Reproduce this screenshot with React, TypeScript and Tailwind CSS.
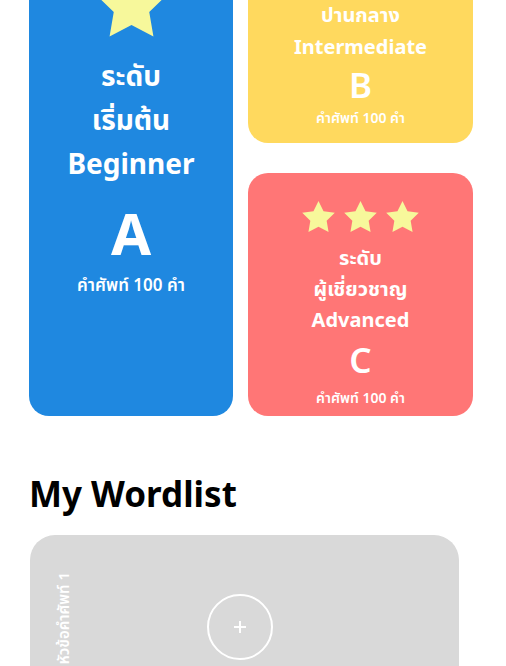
import React from "react";

const Star = ({ w, h }: { w: number; h: number }) => (
  <svg width={w} height={h} viewBox="2 2 20 19.02" className="shrink-0">
    <path
      d="M12 2l3.09 6.26L22 9.27l-5 4.87 1.18 6.88L12 17.77l-6.18 3.25L7 14.14 2 9.27l6.91-1.01L12 2z"
      fill="#f7f89b"
    />
  </svg>
);

const font = { fontFamily: '"Noto Sans", "Noto Sans Thai", "Open Sans", sans-serif' };

export default function App() {
  return (
    <div
      className="w-[506px] h-[666px] overflow-hidden bg-white pl-[29px] text-white"
      style={font}
    >
      <div className="grid grid-cols-[204px_225px] grid-rows-[203px_243px] gap-x-[15px] gap-y-[30px] mt-[-60px]">
        {/* Blue */}
        <div className="row-span-2 rounded-[20px] bg-[#1f88e0] flex flex-col items-center pt-[29px]">
          <Star w={71} h={67.5} />
          <div className="mt-[16px] flex flex-col items-center text-[28px] leading-[44px] font-bold">
            <span>ระดับ</span>
            <span>เริ่มต้น</span>
            <span>Beginner</span>
          </div>
          <div className="mt-[19px] text-[58px] leading-[58px] font-bold">A</div>
          <div className="mt-[13px] text-[17px] leading-[20px] font-semibold">คำศัพท์ 100 คำ</div>
        </div>
        {/* Yellow */}
        <div className="rounded-[20px] bg-[#ffd95e] flex flex-col items-center justify-end pb-[17px] overflow-hidden">
          <div className="flex gap-[9px]">
            <Star w={33} h={31} />
            <Star w={33} h={31} />
          </div>
          <div className="mt-[14px] flex flex-col items-center text-[20px] leading-[31.5px] font-bold">
            <span>ระดับ</span>
            <span>ปานกลาง</span>
            <span>Intermediate</span>
          </div>
          <div className="mt-[3px] text-[35px] leading-[40px] font-semibold">B</div>
          <div className="mt-[5px] text-[14px] leading-[16px] font-semibold">คำศัพท์ 100 คำ</div>
        </div>
        {/* Red */}
        <div className="rounded-[20px] bg-[#ff7676] flex flex-col items-center pt-[28px]">
          <div className="flex gap-[9px]">
            <Star w={33} h={31} />
            <Star w={33} h={31} />
            <Star w={33} h={31} />
          </div>
          <div className="mt-[10px] flex flex-col items-center text-[20px] leading-[31px] font-bold">
            <span>ระดับ</span>
            <span>ผู้เชี่ยวชาญ</span>
            <span>Advanced</span>
          </div>
          <div className="mt-[5px] text-[35px] leading-[40px] font-semibold">C</div>
          <div className="mt-[10px] text-[14px] leading-[16px] font-semibold">คำศัพท์ 100 คำ</div>
        </div>
      </div>

      <h2 className="mt-[58px] text-[35px] leading-[40px] font-bold text-black">My Wordlist</h2>

      <div className="mt-[21px] ml-px w-[429px] h-[200px] rounded-[25px] bg-[#d9d9d9] flex">
        <div className="w-[66px] flex justify-center pt-[37px]">
          <span className="[writing-mode:vertical-rl] rotate-180 text-[15px] leading-[20px] font-semibold whitespace-nowrap self-start origin-center">
            หัวข้อคำศัพท์ 1
          </span>
        </div>
        <div className="flex-1 flex justify-center pt-[59px] pr-[75px]">
          <div className="w-[66px] h-[66px] rounded-full border-2 border-white flex items-center justify-center">
            <svg width="14" height="14" viewBox="0 0 14 14">
              <path d="M7 1v12M1 7h12" stroke="white" strokeWidth="2" />
            </svg>
          </div>
        </div>
      </div>
    </div>
  );
}
